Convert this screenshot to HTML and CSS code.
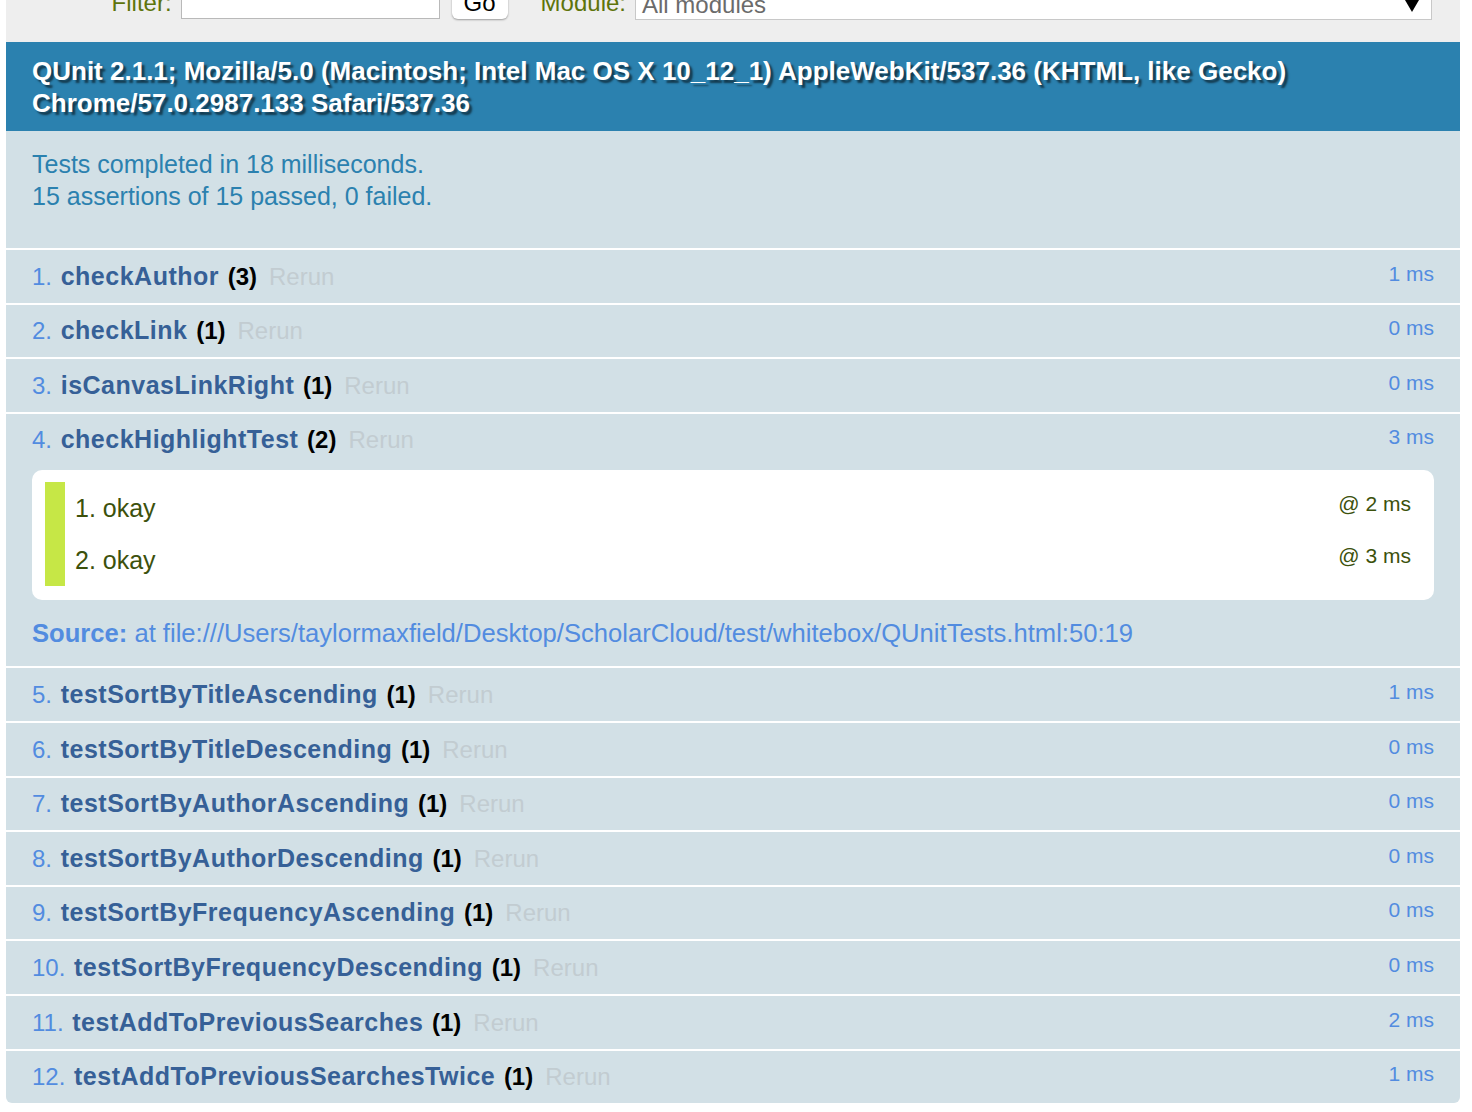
FILE: index.html
```html
<!DOCTYPE html>
<html lang="en">
<head>
<meta charset="utf-8">
<title>QUnit Tests</title>
<link rel="stylesheet" href="styles.css">
</head>
<body>
<div class="qunit">
  <div class="toolbar">
    <div class="filters">
      <span class="tb-label">Filter:</span>
      <span class="tb-input"></span>
      <span class="tb-button">Go</span>
      <span class="tb-label module-label">Module:</span>
      <span class="tb-select"><span class="sel-text">All modules</span><svg class="sel-arrow" width="14" height="12" viewBox="0 0 14 12"><polygon points="0,0 14,0 7,12" fill="#000"/></svg></span>
    </div>
  </div>
  <h2 class="user-agent">QUnit 2.1.1; Mozilla/5.0 (Macintosh; Intel Mac OS X 10_12_1) AppleWebKit/537.36 (KHTML, like Gecko) Chrome/57.0.2987.133 Safari/537.36</h2>
  <p class="test-result">Tests completed in 18 milliseconds.<br>15 assertions of 15 passed, 0 failed.</p>
  <ol class="tests">
    <li class="test"><span class="runtime">1 ms</span><span class="num">1.</span> <strong class="name">checkAuthor</strong> <b class="counts">(3)</b><a class="rerun">Rerun</a></li>
    <li class="test"><span class="runtime">0 ms</span><span class="num">2.</span> <strong class="name">checkLink</strong> <b class="counts">(1)</b><a class="rerun">Rerun</a></li>
    <li class="test"><span class="runtime">0 ms</span><span class="num">3.</span> <strong class="name">isCanvasLinkRight</strong> <b class="counts">(1)</b><a class="rerun">Rerun</a></li>
    <li class="test expanded"><span class="runtime">3 ms</span><span class="num">4.</span> <strong class="name">checkHighlightTest</strong> <b class="counts">(2)</b><a class="rerun">Rerun</a>
      <ol class="asserts">
        <li class="assert"><span class="assert-time">@ 2 ms</span>1. okay</li>
        <li class="assert"><span class="assert-time">@ 3 ms</span>2. okay</li>
      </ol>
      <p class="source"><b>Source:</b> at file:///Users/taylormaxfield/Desktop/ScholarCloud/test/whitebox/QUnitTests.html:50:19</p>
    </li>
    <li class="test"><span class="runtime">1 ms</span><span class="num">5.</span> <strong class="name">testSortByTitleAscending</strong> <b class="counts">(1)</b><a class="rerun">Rerun</a></li>
    <li class="test"><span class="runtime">0 ms</span><span class="num">6.</span> <strong class="name">testSortByTitleDescending</strong> <b class="counts">(1)</b><a class="rerun">Rerun</a></li>
    <li class="test"><span class="runtime">0 ms</span><span class="num">7.</span> <strong class="name">testSortByAuthorAscending</strong> <b class="counts">(1)</b><a class="rerun">Rerun</a></li>
    <li class="test"><span class="runtime">0 ms</span><span class="num">8.</span> <strong class="name">testSortByAuthorDescending</strong> <b class="counts">(1)</b><a class="rerun">Rerun</a></li>
    <li class="test"><span class="runtime">0 ms</span><span class="num">9.</span> <strong class="name">testSortByFrequencyAscending</strong> <b class="counts">(1)</b><a class="rerun">Rerun</a></li>
    <li class="test"><span class="runtime">0 ms</span><span class="num">10.</span> <strong class="name">testSortByFrequencyDescending</strong> <b class="counts">(1)</b><a class="rerun">Rerun</a></li>
    <li class="test"><span class="runtime">2 ms</span><span class="num">11.</span> <strong class="name">testAddToPreviousSearches</strong> <b class="counts">(1)</b><a class="rerun">Rerun</a></li>
    <li class="test last"><span class="runtime">1 ms</span><span class="num">12.</span> <strong class="name">testAddToPreviousSearchesTwice</strong> <b class="counts">(1)</b><a class="rerun">Rerun</a></li>
  </ol>
</div>
</body>
</html>
```

FILE: styles.css
```css
html, body {
  margin: 0;
  padding: 0;
  background: #fff;
}

body {
  font-family: "Liberation Sans", Arial, Helvetica, sans-serif;
}

.qunit {
  margin: 0 12px 0 6px;
}

/* toolbar (scrolled partly out of view) */
.toolbar {
  background: #eee;
  color: #5e740b;
  padding: 0 28px 23px 26px;
  margin-top: -21px;
}

.filters {
  display: flex;
  justify-content: flex-end;
  align-items: flex-start;
  height: 40px;
}

.tb-label {
  font-size: 24px;
  line-height: 28px;
  margin-top: 10px;
  margin-right: 9px;
}

.module-label {
  margin-left: 29px;
}

.tb-input {
  width: 259px;
  height: 40px;
  box-sizing: border-box;
  background: #fff;
  border: 1px solid #b9b9b9;
  margin-right: 12px;
}

.tb-button {
  width: 56px;
  height: 40px;
  box-sizing: border-box;
  background: #fff;
  border-radius: 6px;
  box-shadow: 0 1px 2px rgba(0, 0, 0, 0.35);
  color: #000;
  font-size: 24px;
  line-height: 28px;
  padding-top: 10px;
  text-align: center;
  margin-right: 4px;
}

.tb-select {
  width: 797px;
  height: 41px;
  box-sizing: border-box;
  background: #fff;
  border: 1px solid #c8c8c8;
  display: flex;
  align-items: flex-start;
  padding: 11px 12px 0 6px;
}

.sel-text {
  color: #6b6b6b;
  font-size: 24px;
  line-height: 28px;
}

.sel-arrow {
  margin-left: auto;
  margin-top: 9px;
}

/* user agent banner */
.user-agent {
  margin: 0;
  background: #2b81af;
  color: #fff;
  font-size: 26px;
  font-weight: bold;
  line-height: 32px;
  letter-spacing: 0;
  padding: 13px 26px 12px 26px;
  text-shadow: 3px 3px 2px rgba(0, 0, 0, 0.55);
}

/* result summary */
.test-result {
  margin: 0;
  background: #d2e0e6;
  color: #2b81af;
  font-size: 25px;
  line-height: 32px;
  padding: 17px 26px 36px 26px;
  border-bottom: 2px solid #fff;
}

/* test list */
.tests {
  list-style: none;
  margin: 0;
  padding: 0;
}

.test {
  background: #d2e0e6;
  color: #528ce0;
  font-size: 24px;
  line-height: 33.4px;
  padding: 9.6px 26px;
  border-bottom: 2px solid #fff;
}

.test.last {
  border-bottom: none;
  border-radius: 0 0 6px 6px;
}

.runtime {
  float: right;
  font-size: 21px;
  line-height: 28px;
  color: #528ce0;
}

.name {
  color: #366097;
  font-size: 25px;
  letter-spacing: 0.5px;
  margin-left: 2px;
}

.counts {
  color: #000;
  margin-left: 2px;
}

.rerun {
  color: #c2ccd1;
  margin-left: 12px;
}

.asserts {
  list-style: none;
  margin: 13px 0 0 0;
  padding: 12px 13px 14px 13px;
  background: #fff;
  border-radius: 10px;
}

.assert {
  border-left: 20px solid #c6e746;
  color: #3c510c;
  font-size: 25px;
  line-height: 32px;
  padding: 10px 10px 10px 10px;
}

.assert-time {
  float: right;
  font-size: 21px;
  line-height: 24px;
  color: #3c510c;
}

.source {
  margin: 17px 0 8px 0;
  color: #528ce0;
  font-size: 25.6px;
  line-height: 32px;
}
```
